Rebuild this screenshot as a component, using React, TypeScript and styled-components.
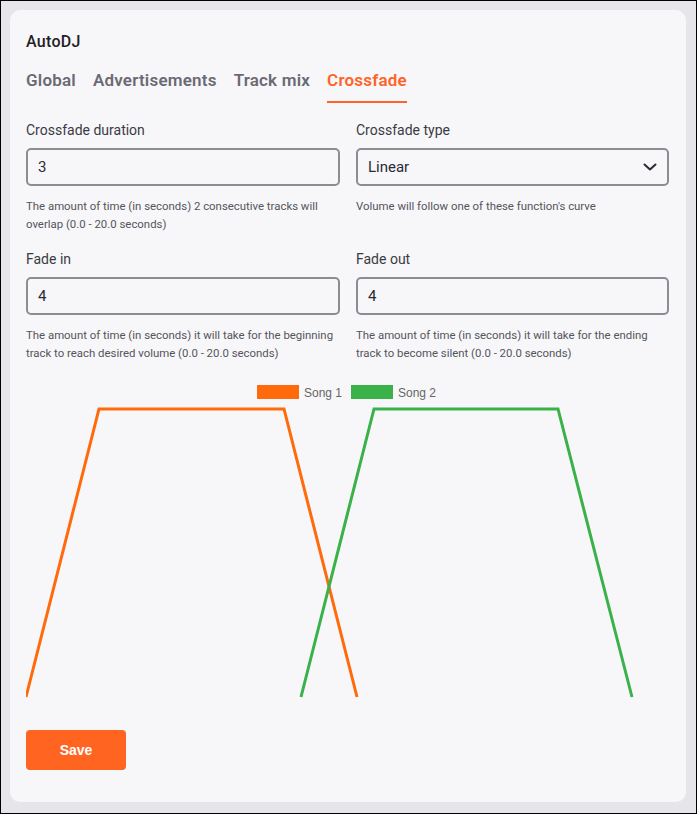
import React from "react";
import styled, { createGlobalStyle } from "styled-components";

const Global = createGlobalStyle`
  html, body { margin: 0; padding: 0; }
  body { background: #e6e5e9; font-family: Roboto, "Noto Sans", sans-serif; }
  * { box-sizing: border-box; }
`;

const Frame = styled.div`
  width: 697px;
  height: 814px;
  border: 1px solid #000;
  padding: 9px 10px 11px 9px;
  background: #e6e5e9;
`;

const Card = styled.div`
  background: #f7f7f9;
  border-radius: 10px;
  padding: 22px 16px 30px 16px;
  height: 100%;
  display: flex;
  flex-direction: column;
`;

const Title = styled.div`
  font-size: 16px;
  font-weight: 500;
  letter-spacing: 0.3px;
  color: #1f1f26;
  line-height: 20px;
`;

const Tabs = styled.div`
  display: flex;
  gap: 17px;
  margin-top: 17px;
`;

const Tab = styled.div<{ $active?: boolean }>`
  font-size: 17px;
  font-weight: 600;
  letter-spacing: 0.2px;
  line-height: 22px;
  padding-bottom: 10px;
  color: ${(p) => (p.$active ? "#ff6326" : "#6b6a74")};
  border-bottom: 2px solid ${(p) => (p.$active ? "#ff6326" : "transparent")};
`;

const Grid = styled.div`
  display: grid;
  grid-template-columns: 314px 313px;
  column-gap: 16px;
  row-gap: 16px;
  margin-top: 17px;
`;

const Field = styled.div`
  display: flex;
  flex-direction: column;
`;

const Label = styled.div`
  font-size: 14px;
  color: #3b3a44;
  line-height: 20px;
`;

const InputBox = styled.div`
  margin-top: 8px;
  height: 38px;
  border: 2px solid #8d8c93;
  border-radius: 5px;
  display: flex;
  align-items: center;
  justify-content: space-between;
  padding: 0 10px 0 10px;
  font-size: 15px;
  color: #2b2a33;
`;

const Help = styled.div`
  margin-top: 11px;
  font-size: 11.4px;
  line-height: 18px;
  color: #55545c;
`;

const ChartWrap = styled.div`
  margin-top: 18px;
`;

const SaveButton = styled.button`
  margin-top: 26px;
  width: 100px;
  height: 40px;
  border: none;
  border-radius: 4px;
  background: #ff6420;
  color: #fff;
  font-family: "Liberation Sans", Arial, sans-serif;
  font-weight: 700;
  font-size: 14px;
  cursor: pointer;
`;

const Chevron = () => (
  <svg width="14" height="8" viewBox="0 0 14 8">
    <path d="M1.5 1.5 L7 6.5 L12.5 1.5" fill="none" stroke="#2b2a33" strokeWidth="2" strokeLinecap="round" strokeLinejoin="round" />
  </svg>
);

const Chart = () => (
  <svg width="643" height="320" viewBox="0 0 643 320">
    <rect x="231" y="5" width="42" height="14" fill="#ff6a0d" />
    <text x="278" y="17" fontFamily="Liberation Sans, Arial, sans-serif" fontSize="12" fill="#666">Song 1</text>
    <rect x="325" y="5" width="42" height="14" fill="#3bb14a" />
    <text x="372" y="17" fontFamily="Liberation Sans, Arial, sans-serif" fontSize="12" fill="#666">Song 2</text>
    <polyline points="0,317 73,29 258,29 331,317" fill="none" stroke="#ff6a0d" strokeWidth="3" strokeLinejoin="miter" />
    <polyline points="275,317 348,29 532,29 606,317" fill="none" stroke="#3bb14a" strokeWidth="3" strokeLinejoin="miter" />
  </svg>
);

export default function App() {
  return (
    <>
      <Global />
      <Frame>
        <Card>
          <Title>AutoDJ</Title>
          <Tabs>
            <Tab>Global</Tab>
            <Tab>Advertisements</Tab>
            <Tab>Track mix</Tab>
            <Tab $active>Crossfade</Tab>
          </Tabs>
          <Grid>
            <Field>
              <Label>Crossfade duration</Label>
              <InputBox>3</InputBox>
              <Help>The amount of time (in seconds) 2 consecutive tracks will overlap (0.0 - 20.0 seconds)</Help>
            </Field>
            <Field>
              <Label>Crossfade type</Label>
              <InputBox>
                Linear
                <Chevron />
              </InputBox>
              <Help>Volume will follow one of these function's curve</Help>
            </Field>
            <Field>
              <Label>Fade in</Label>
              <InputBox>4</InputBox>
              <Help>The amount of time (in seconds) it will take for the beginning track to reach desired volume (0.0 - 20.0 seconds)</Help>
            </Field>
            <Field>
              <Label>Fade out</Label>
              <InputBox>4</InputBox>
              <Help>The amount of time (in seconds) it will take for the ending track to become silent (0.0 - 20.0 seconds)</Help>
            </Field>
          </Grid>
          <ChartWrap>
            <Chart />
          </ChartWrap>
          <div>
            <SaveButton>Save</SaveButton>
          </div>
        </Card>
      </Frame>
    </>
  );
}
